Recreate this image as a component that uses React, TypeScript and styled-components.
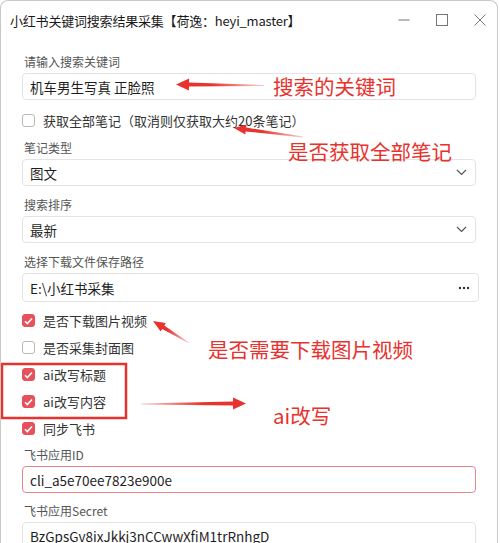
import React from "react"
import styled, { createGlobalStyle } from "styled-components"

const GlobalStyle = createGlobalStyle`
  html, body {
    margin: 0;
    padding: 0;
    background: #ffffff;
  }
  body {
    font-family: "Noto Sans CJK SC", "Noto Sans", sans-serif;
    color: #1f1f1f;
  }
`

const Window = styled.div`
  position: relative;
  width: 496px;
  height: 560px;
  border: 1px solid #c9c9c9;
  border-bottom: none;
  border-radius: 8px 8px 0 0;
  background: #ffffff;
  overflow: hidden;
`

const TitleBar = styled.div`
  display: flex;
  align-items: center;
  height: 38px;
  padding-left: 9px;
`

const Title = styled.div`
  flex: 1;
  font-size: 13px;
  color: #1a1a1a;
  letter-spacing: -0.2px;
`

const Controls = styled.div`
  display: flex;
  align-items: center;
  gap: 20px;
  padding-right: 8px;
  color: #6a6a6a;
`

const ControlButton = styled.span`
  display: flex;
  align-items: center;
  justify-content: center;
  width: 18px;
  height: 18px;
`

const Content = styled.div`
  display: flex;
  flex-direction: column;
  padding: 14px 21px 0 21px;
`

const Field = styled.div<{ $top?: number }>`
  display: flex;
  flex-direction: column;
  gap: 2px;
  margin-top: ${(p) => p.$top ?? 10}px;
`

const Label = styled.label`
  font-size: 12px;
  line-height: 18px;
  color: #555555;
  padding-left: 2px;
`

const Box = styled.div<{ $focused?: boolean; $wide?: boolean }>`
  display: flex;
  align-items: center;
  height: ${(p) => (p.$wide ? 29 : 27)}px;
  padding: 0 8px 0 7px;
  margin-right: ${(p) => (p.$wide ? "-3px" : "0")};
  border: 1px solid ${(p) => (p.$focused ? "#e6868b" : "#e3e3e3")};
  border-radius: 4px;
  background: #ffffff;
  font-size: 13.5px;
  color: #1e1e1e;
  box-sizing: border-box;
  white-space: nowrap;
`

const BoxText = styled.span`
  flex: 1;
  overflow: hidden;
`

const CheckGroup = styled.div<{ $top: number }>`
  display: flex;
  flex-direction: column;
  margin-top: ${(p) => p.$top}px;
`

const CheckRow = styled.div`
  display: flex;
  align-items: center;
  height: 27px;
  gap: 8px;
  font-size: 13px;
  color: #333333;
`

const CheckBox = styled.span<{ $on: boolean }>`
  display: flex;
  align-items: center;
  justify-content: center;
  width: 13px;
  height: 13px;
  border-radius: 3px;
  box-sizing: border-box;
  background: ${(p) => (p.$on ? "#e6515b" : "#ffffff")};
  border: 1px solid ${(p) => (p.$on ? "#e6515b" : "#b9b9b9")};
`

const Note = styled.div<{ $x: number; $y: number }>`
  position: absolute;
  left: ${(p) => p.$x}px;
  top: ${(p) => p.$y}px;
  font-size: 20.5px;
  line-height: 26px;
  color: #e8322d;
  white-space: nowrap;
`

const Overlay = styled.svg`
  position: absolute;
  left: 0;
  top: 0;
  pointer-events: none;
`

const Chevron = () => (
  <svg width="11" height="7" viewBox="0 0 11 7">
    <path d="M1 1l4.5 4.5L10 1" fill="none" stroke="#555" strokeWidth="1.2" />
  </svg>
)

const MoreDots = () => (
  <svg width="12" height="4" viewBox="0 0 12 4">
    <circle cx="2" cy="2" r="1.2" fill="#333" />
    <circle cx="6" cy="2" r="1.2" fill="#333" />
    <circle cx="10" cy="2" r="1.2" fill="#333" />
  </svg>
)

const Check: React.FC<{ on: boolean }> = ({ on }) => (
  <CheckBox $on={on}>
    {on && (
      <svg width="9" height="8" viewBox="0 0 9 8">
        <path d="M1 4.2l2.3 2.3L8 1.5" fill="none" stroke="#fff" strokeWidth="1.6" />
      </svg>
    )}
  </CheckBox>
)

// arrow drawn as a tapered shaft with a triangular head
const arrow = (x1: number, y1: number, x2: number, y2: number, head = 13, hw = 6) => {
  const dx = x2 - x1
  const dy = y2 - y1
  const len = Math.hypot(dx, dy)
  const ux = dx / len
  const uy = dy / len
  const nx = -uy
  const ny = ux
  const bx = x2 - ux * head
  const by = y2 - uy * head
  const pts = [
    [x1 + nx * 0.4, y1 + ny * 0.4],
    [bx + nx * 2, by + ny * 2],
    [bx + nx * hw, by + ny * hw],
    [x2, y2],
    [bx - nx * hw, by - ny * hw],
    [bx - nx * 2, by - ny * 2],
    [x1 - nx * 0.4, y1 - ny * 0.4],
  ]
  return pts.map((p) => p.map((v) => v.toFixed(1)).join(",")).join(" ")
}

const checks = [
  { text: "是否下载图片视频", on: true },
  { text: "是否采集封面图", on: false },
  { text: "ai改写标题", on: true },
  { text: "ai改写内容", on: true },
  { text: "同步飞书", on: true },
]

const App: React.FC = () => {
  return (
    <>
      <GlobalStyle />
      <Window>
        <TitleBar>
          <Title>小红书关键词搜索结果采集【荷逸：heyi_master】</Title>
          <Controls>
            <ControlButton>
              <svg width="12" height="12" viewBox="0 0 12 12">
                <path d="M0.5 6h11" stroke="#777" strokeWidth="1" />
              </svg>
            </ControlButton>
            <ControlButton>
              <svg width="12" height="12" viewBox="0 0 12 12">
                <rect x="0.5" y="0.5" width="11" height="11" fill="none" stroke="#777" strokeWidth="1" />
              </svg>
            </ControlButton>
            <ControlButton>
              <svg width="12" height="12" viewBox="0 0 12 12">
                <path d="M0.5 0.5l11 11M11.5 0.5l-11 11" stroke="#777" strokeWidth="1" />
              </svg>
            </ControlButton>
          </Controls>
        </TitleBar>

        <Content>
          <Field $top={0}>
            <Label>请输入搜索关键词</Label>
            <Box>
              <BoxText>机车男生写真 正脸照</BoxText>
            </Box>
          </Field>

          <CheckGroup $top={7}>
            <CheckRow>
              <Check on={false} />
              获取全部笔记（取消则仅获取大约20条笔记）
            </CheckRow>
          </CheckGroup>

          <Field $top={5}>
            <Label>笔记类型</Label>
            <Box>
              <BoxText>图文</BoxText>
              <Chevron />
            </Box>
          </Field>

          <Field>
            <Label>搜索排序</Label>
            <Box>
              <BoxText>最新</BoxText>
              <Chevron />
            </Box>
          </Field>

          <Field>
            <Label>选择下载文件保存路径</Label>
            <Box $wide>
              <BoxText>E:\小红书采集</BoxText>
              <MoreDots />
            </Box>
          </Field>

          <CheckGroup $top={5}>
            {checks.map((c) => (
              <CheckRow key={c.text}>
                <Check on={c.on} />
                {c.text}
              </CheckRow>
            ))}
          </CheckGroup>

          <Field $top={4}>
            <Label>飞书应用ID</Label>
            <Box $focused>
              <BoxText>cli_a5e70ee7823e900e</BoxText>
            </Box>
          </Field>

          <Field $top={9}>
            <Label>飞书应用Secret</Label>
            <Box>
              <BoxText>BzGpsGv8ixJkkj3nCCwwXfiM1trRnhgD</BoxText>
            </Box>
          </Field>
        </Content>

        <Overlay width="500" height="560">
          <defs>
            <linearGradient id="fadeL" x1="1" y1="0" x2="0" y2="0">
              <stop offset="0" stopColor="#e8322d" stopOpacity="0.25" />
              <stop offset="0.6" stopColor="#e8322d" />
            </linearGradient>
            <linearGradient id="fadeR" x1="0" y1="0" x2="1" y2="0">
              <stop offset="0" stopColor="#e8322d" stopOpacity="0.25" />
              <stop offset="0.6" stopColor="#e8322d" />
            </linearGradient>
          </defs>
          <polygon points={arrow(263, 84.5, 175, 83.5)} fill="url(#fadeL)" />
          <polygon points={arrow(302, 136, 233, 127, 12, 5)} fill="url(#fadeL)" />
          <polygon points={arrow(188, 342, 152, 320, 12, 5)} fill="url(#fadeL)" />
          <polygon points={arrow(140, 403, 245, 402.5, 13, 6)} fill="url(#fadeR)" />
          <rect x="1" y="363" width="124" height="54" fill="none" stroke="#e8322d" strokeWidth="2.5" />
        </Overlay>

        <Note $x={272} $y={72}>搜索的关键词</Note>
        <Note $x={287} $y={137}>是否获取全部笔记</Note>
        <Note $x={207} $y={335}>是否需要下载图片视频</Note>
        <Note $x={272} $y={401}>ai改写</Note>
      </Window>
    </>
  )
}

export default App
